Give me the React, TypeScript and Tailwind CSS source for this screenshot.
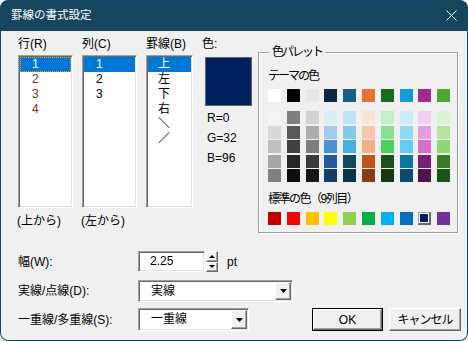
import React from 'react';

const themeRow = ['#ffffff', '#000000', '#e8e8e8', '#0e2841', '#156082', '#e97132', '#196b24', '#0f9ed5', '#a02b93', '#4ea72e'];

const tintRows = [
    ['#f4f4f4', '#7f7f7f', '#d3d3d3', '#daeef8', '#c0e4f5', '#fbe3d6', '#c1f0c8', '#c9eefa', '#f2ceef', '#dcf2d2'],
    ['#d9d9d9', '#595959', '#adadad', '#a6caec', '#83cbeb', '#f7c7ac', '#84e291', '#8fdaf7', '#e49edd', '#b4e5a2'],
    ['#bec1c3', '#404040', '#7e7e7e', '#4a90d9', '#45b0e1', '#f4ad86', '#47d45a', '#61cbf3', '#d86dcd', '#8ed973'],
    ['#a6a6a6', '#262626', '#3a3a3a', '#1f5c9a', '#104862', '#c0551a', '#1b4f1b', '#0b76a0', '#782170', '#3a7c22'],
    ['#808080', '#0d0d0d', '#171717', '#173c63', '#0c3246', '#843c12', '#163616', '#074f6a', '#501549', '#1f531c'],
];

const standardRow = ['#c00000', '#ff0000', '#ffc000', '#ffff00', '#92d050', '#00b050', '#00b0f0', '#0070c0', '#002060', '#7030a0'];

const sunken = 'border border-t-[#a0a0a0] border-l-[#a0a0a0] border-b-white border-r-white shadow-[inset_1px_1px_0_#696969,inset_-1px_-1px_0_#e3e3e3]';
const raised = 'border border-t-white border-l-white border-b-[#696969] border-r-[#696969] shadow-[inset_-1px_-1px_0_#a0a0a0,inset_1px_1px_0_#f0f0f0]';

const ListBox: React.FC<{ items: string[]; width: string; pad: string; focus?: boolean; color?: string }> = ({ items, width, pad, focus, color }) => (
    <div className={`${width} h-[153px] mt-[4px] bg-white ${sunken} p-[1px]`}>
        {items.map((it, i) => (
            <div
                key={i}
                className={`h-[15px] leading-[15px] ${pad} ${i === 0 ? 'bg-[#0078d7] text-white' : color ?? 'text-black'} ${i === 0 && focus ? 'outline outline-1 outline-dotted outline-[#f7a000] -outline-offset-1' : ''}`}
            >
                {it}
            </div>
        ))}
    </div>
);

const DownArrow = () => (
    <svg width="7" height="4" viewBox="0 0 7 4"><path d="M0 0h7L3.5 4z" fill="#000" /></svg>
);

const Combo: React.FC<{ value: string; width: string }> = ({ value, width }) => (
    <div className={`${width} h-full bg-white ${sunken} flex items-stretch p-[1px]`}>
        <span className="flex-1 pl-[11px] leading-[19px]">{value}</span>
        <div className={`w-[16px] ${raised} bg-[#f0f0f0] flex items-center justify-center`}>
            <DownArrow />
        </div>
    </div>
);

export default function App() {
    return (
        <div className="w-[468px] h-[341px] bg-[#16465f] rounded-[8px] flex flex-col overflow-hidden font-['Liberation_Sans','Noto_Sans_CJK_JP',sans-serif] text-[12px] text-black">
            <div className="h-[31px] shrink-0 flex items-center justify-between pl-[11px] pr-[10px] text-white text-[11.5px]">
                <span>罫線の書式設定</span>
                <svg width="11" height="11" viewBox="0 0 11 11" className="mr-[1px]">
                    <path d="M0.5 0.5l10 10M10.5 0.5l-10 10" stroke="#fff" strokeWidth="1" />
                </svg>
            </div>
            <div className="flex-1 mx-[1px] mb-[1px] bg-[#f0f0f0] rounded-b-[7px] pl-[17px] pt-[6px]">
                {/* upper part */}
                <div className="flex items-start">
                    <div className="flex flex-col">
                        <span className="leading-[14px]">行(R)</span>
                        <ListBox items={['1', '2', '3', '4']} width="w-[55px]" pad="pl-[12px]" focus color="text-[#7a3410]" />
                        <span className="leading-[14px] mt-[6px] -ml-[1px]">(上から)</span>
                    </div>
                    <div className="flex flex-col ml-[9px]">
                        <span className="leading-[14px]">列(C)</span>
                        <ListBox items={['1', '2', '3']} width="w-[55px]" pad="pl-[12px]" />
                        <span className="leading-[14px] mt-[6px] -ml-[1px]">(左から)</span>
                    </div>
                    <div className="flex flex-col ml-[9px]">
                        <span className="leading-[14px]">罫線(B)</span>
                        <ListBox items={['上', '左', '下', '右', '＼', '／']} width="w-[47px]" pad="pl-[10px]" />
                    </div>
                    <div className="flex flex-col ml-[9px] w-[50px]">
                        <span className="leading-[14px]">色:</span>
                        <div className="ml-[3px] mt-[6px] w-[47px] h-[49px] bg-[#002060] border border-[#646464]" />
                        <div className="ml-[5px] mt-[2px] leading-[20px]">
                            <div>R=0</div>
                            <div>G=32</div>
                            <div>B=96</div>
                        </div>
                    </div>
                    <div className="relative ml-[6px] mt-[15px] w-[200px] h-[181px] border border-[#a0a0a0] shadow-[inset_1px_1px_0_#fff,1px_1px_0_#fff] pl-[9px] pt-[16px]">
                        <span className="absolute left-[10px] -top-[8px] bg-[#f0f0f0] px-[3px] leading-[14px] tracking-[-2px]">色パレット</span>
                        <div className="leading-[14px] tracking-[-2px]">テーマの色</div>
                        <div className="mt-[6px] grid grid-cols-[repeat(10,13px)] gap-x-[5.8px]">
                            {themeRow.map((c, i) => (
                                <div key={i} className="h-[13px]" style={{ backgroundColor: c }} />
                            ))}
                        </div>
                        <div className="mt-[9px] grid grid-cols-[repeat(10,13px)] gap-x-[5.8px] gap-y-[1.5px]">
                            {tintRows.flat().map((c, i) => (
                                <div key={i} className="h-[13px]" style={{ backgroundColor: c }} />
                            ))}
                        </div>
                        <div className="mt-[10px] leading-[14px] tracking-[-1.5px]">標準の色（9列目）</div>
                        <div className="mt-[6px] grid grid-cols-[repeat(10,13px)] gap-x-[5.8px]">
                            {standardRow.map((c, i) =>
                                i === 8 ? (
                                    <div key={i} className="h-[13px] border border-t-[#a0a0a0] border-l-[#a0a0a0] border-b-[#696969] border-r-[#696969] border-b-2 border-r-2 bg-white p-[1px]">
                                        <div className="w-full h-full" style={{ backgroundColor: c }} />
                                    </div>
                                ) : (
                                    <div key={i} className="h-[13px]" style={{ backgroundColor: c }} />
                                )
                            )}
                        </div>
                    </div>
                </div>

                {/* lower part */}
                <div className="mt-[18px] flex items-center h-[21px]">
                    <span className="w-[120px] leading-[14px]">幅(W):</span>
                    <div className={`w-[67px] h-full bg-white ${sunken} pl-[11px] leading-[19px]`}>2.25</div>
                    <div className="ml-[1px] w-[12px] h-full flex flex-col">
                        <div className={`flex-1 ${raised} bg-[#f0f0f0] flex items-center justify-center`}>
                            <svg width="6" height="3" viewBox="0 0 6 3"><path d="M0 3h6L3 0z" fill="#000" /></svg>
                        </div>
                        <div className={`flex-1 ${raised} bg-[#f0f0f0] flex items-center justify-center`}>
                            <svg width="6" height="3" viewBox="0 0 6 3"><path d="M0 0h6L3 3z" fill="#000" /></svg>
                        </div>
                    </div>
                    <span className="ml-[9px] leading-[14px]">pt</span>
                </div>
                <div className="mt-[8px] flex items-center h-[22px]">
                    <span className="w-[120px] leading-[14px]">実線/点線(D):</span>
                    <Combo value="実線" width="w-[155px]" />
                </div>
                <div className="mt-[6px] flex items-center h-[23px]">
                    <span className="w-[120px] leading-[14px]">一重線/多重線(S):</span>
                    <Combo value="一重線" width="w-[111px]" />
                    <div className="ml-[63px] w-[71px] h-full border border-black">
                        <div className={`w-full h-full ${raised} bg-[#f0f0f0] flex items-center justify-center`}>OK</div>
                    </div>
                    <div className={`ml-[6px] w-[72px] h-full ${raised} bg-[#f0f0f0] flex items-center justify-center tracking-[-1px]`}>キャンセル</div>
                </div>
            </div>
        </div>
    );
}
